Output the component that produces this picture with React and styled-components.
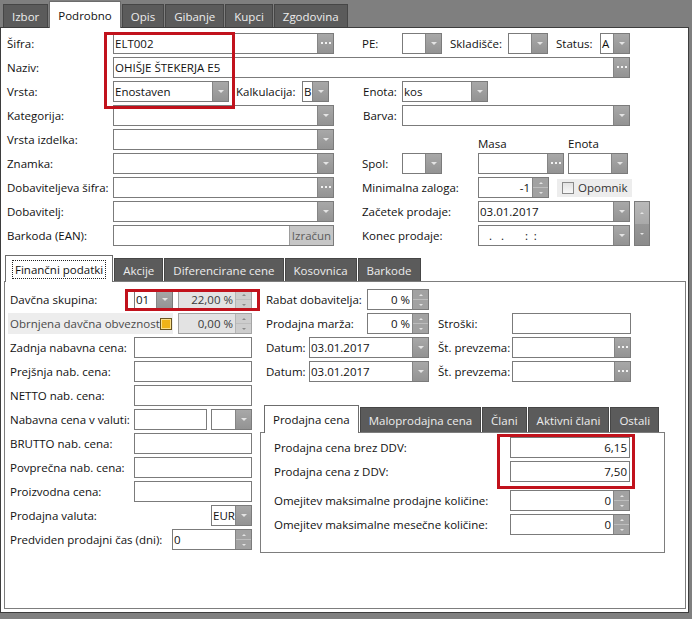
import React from 'react';
import styled, { createGlobalStyle, css } from 'styled-components';

const GlobalStyle = createGlobalStyle`
  html, body {
    margin: 0;
    padding: 0;
    background: #7f7f7f;
  }
  body {
    font-family: "Open Sans", "Noto Sans", sans-serif;
    font-size: 11.5px;
    color: #111;
  }
  * {
    box-sizing: border-box;
  }
`;

const Screen = styled.div`
  position: relative;
  width: 692px;
  height: 619px;
  background: #7f7f7f;
  overflow: hidden;
`;

const TabBar = styled.div`
  position: relative;
  z-index: 1;
  flex: none;
  display: flex;
  align-items: flex-end;
  gap: 1px;
  height: ${(p) => p.$h}px;
  padding-left: ${(p) => p.$pl || 0}px;
`;

const Tab = styled.div`
  display: flex;
  align-items: center;
  justify-content: center;
  height: ${(p) => p.$h}px;
  padding: 0 ${(p) => p.$px || 8}px;
  white-space: nowrap;
  background: #5b5b5b;
  color: #ededed;
  border: 1px solid #464646;
  border-bottom: none;

  ${(p) =>
    p.$active &&
    css`
      height: ${p.$ah}px;
      margin-bottom: -1px;
      background: #fff;
      color: #111;
      border-color: #6c6c6c;
    `}
`;

const Focus = styled.span`
  padding: 1px 2px;
  outline: 1px dotted #222;
`;

const Window = styled.div`
  display: flex;
  flex-direction: column;
  width: 689px;
  height: 586px;
  background: #fff;
  border: 1px solid #3d3d3d;
`;

const TopForm = styled.div`
  display: flex;
  flex-direction: column;
  gap: 3px;
  padding: 5px 0 0 6px;
  margin-bottom: 9px;
`;

const Row = styled.div`
  display: flex;
  align-items: ${(p) => (p.$bottom ? 'flex-end' : 'center')};
  height: 21px;
  margin-top: ${(p) => p.$mt || 0}px;
  flex: none;
`;

const Split = styled.div`
  display: flex;
`;

const Column = styled.div`
  display: flex;
  flex-direction: column;
  gap: 3px;
  width: ${(p) => (p.$w ? `${p.$w}px` : 'auto')};
  margin-left: ${(p) => p.$ml || 0}px;
  padding-left: ${(p) => p.$pl || 0}px;
  flex: none;
`;

const Label = styled.span`
  flex: none;
  width: ${(p) => (p.$w ? `${p.$w}px` : 'auto')};
  margin-left: ${(p) => p.$ml || 0}px;
  line-height: ${(p) => p.$lh || 16}px;
  white-space: nowrap;
  color: #111;
`;

const Box = styled.div`
  flex: none;
  display: flex;
  width: ${(p) => p.$w}px;
  height: 100%;
  margin-left: ${(p) => p.$ml || 0}px;
  background: ${(p) => (p.$disabled ? '#e3e3e3' : '#fff')};
  border: 1px solid ${(p) => (p.$disabled ? '#a4a4a4' : '#7b7b7b')};
`;

const Val = styled.span`
  flex: 1;
  min-width: 0;
  display: flex;
  align-items: center;
  justify-content: ${(p) => (p.$right ? 'flex-end' : 'flex-start')};
  padding: 0 2px 0 ${(p) => p.$pl || 1}px;
  white-space: pre;
  overflow: hidden;
  color: ${(p) => (p.$disabled ? '#3a3a3a' : '#111')};
`;

const GrayBtn = styled.span`
  flex: none;
  display: flex;
  align-items: center;
  justify-content: center;
  width: 16px;
  background: linear-gradient(#a8a8a8, #939393);
  border-left: 1px solid #858585;
`;

const Arrow = styled.span`
  width: 0;
  height: 0;
  border-left: ${(p) => p.$s || 3}px solid transparent;
  border-right: ${(p) => p.$s || 3}px solid transparent;
  ${(p) =>
    p.$up
      ? `border-bottom: ${p.$s || 3}px solid ${p.$c || '#e4e4e4'};`
      : `border-top: ${p.$s || 3}px solid ${p.$c || '#e4e4e4'};`}
`;

const SpinCol = styled.span`
  flex: none;
  display: flex;
  flex-direction: column;
  width: 16px;
  border-left: 1px solid ${(p) => (p.$disabled ? '#b5b5b5' : '#858585')};
`;

const SpinHalf = styled.span`
  flex: 1;
  display: flex;
  align-items: center;
  justify-content: center;
  background: ${(p) => (p.$disabled ? '#cdcdcd' : '#a2a2a2')};
  & + & {
    border-top: 1px solid ${(p) => (p.$disabled ? '#bdbdbd' : '#8c8c8c')};
  }
`;

const CalcBtn = styled.span`
  flex: none;
  display: flex;
  align-items: center;
  justify-content: center;
  width: 44px;
  background: #c6c6c6;
  border-left: 1px solid #9d9d9d;
  color: #5c5c5c;
`;

const TallSpin = styled.div`
  flex: none;
  display: flex;
  flex-direction: column;
  width: 16px;
  margin-left: 4px;
  border: 1px solid #7b7b7b;
`;

const TallHalf = styled.span`
  flex: 1;
  display: flex;
  align-items: center;
  justify-content: center;
  background: ${(p) => (p.$top ? 'linear-gradient(#b9b9b9, #a9a9a9)' : 'linear-gradient(#979797, #8b8b8b)')};
`;

const CheckArea = styled.div`
  flex: none;
  display: flex;
  align-items: center;
  gap: 4px;
  width: ${(p) => p.$w}px;
  height: 18px;
  margin-left: ${(p) => p.$ml || 0}px;
  padding-left: 5px;
  background: #ededed;
  color: #333;
`;

const CheckSquare = styled.span`
  flex: none;
  width: 12px;
  height: 12px;
  border: 1px solid #8a8a8a;
  background: linear-gradient(#e2e2e2, #f7f7f7);
`;

const FlagLabel = styled.div`
  flex: none;
  display: flex;
  align-items: center;
  justify-content: space-between;
  width: 165px;
  height: 100%;
  margin-left: -2px;
  padding: 0 1px 0 2px;
  background: #ededed;
  color: #4a4a4a;
  white-space: nowrap;
`;

const FlagBox = styled.span`
  flex: none;
  width: 12px;
  height: 12px;
  border: 1px solid #6a5520;
  background: #f0b418;
  box-shadow: inset 0 0 0 1px #fbe08a;
`;

const InnerTabs = styled.div`
  flex: 1;
  display: flex;
  flex-direction: column;
  margin: 0 2px 3px 3px;
`;

const FinPanel = styled.div`
  flex: 1;
  display: flex;
  gap: 8px;
  padding: 7px 0 0 5px;
  border: 1px solid #7d7d7d;
`;

const FinRight = styled.div`
  flex: none;
  width: 405px;
  display: flex;
  flex-direction: column;
`;

const PriceTabs = styled.div`
  display: flex;
  flex-direction: column;
  margin-top: 23px;
`;

const PricePanel = styled.div`
  display: flex;
  flex-direction: column;
  gap: 3px;
  padding: 4px 0 17px 13px;
  border: 1px solid #7d7d7d;
`;

const Mark = styled.div`
  position: absolute;
  left: ${(p) => p.$x}px;
  top: ${(p) => p.$y}px;
  width: ${(p) => p.$w}px;
  height: ${(p) => p.$h}px;
  border: 3px solid #c1121c;
  pointer-events: none;
  z-index: 5;
`;

const Dots = () => (
  <svg width="10" height="3" viewBox="0 0 10 3">
    <rect x="0" y="0" width="2" height="2" fill="#f2f2f2" />
    <rect x="4" y="0" width="2" height="2" fill="#f2f2f2" />
    <rect x="8" y="0" width="2" height="2" fill="#f2f2f2" />
  </svg>
);

const Combo = ({ w, ml, value = '' }) => (
  <Box $w={w} $ml={ml}>
    <Val>{value}</Val>
    <GrayBtn>
      <Arrow />
    </GrayBtn>
  </Box>
);

const Lookup = ({ w, ml, value = '' }) => (
  <Box $w={w} $ml={ml}>
    <Val>{value}</Val>
    <GrayBtn>
      <Dots />
    </GrayBtn>
  </Box>
);

const TextBox = ({ w, ml, value = '', right }) => (
  <Box $w={w} $ml={ml}>
    <Val $right={right}>{value}</Val>
  </Box>
);

const Spin = ({ w, ml, value = '', right, disabled }) => (
  <Box $w={w} $ml={ml} $disabled={disabled}>
    <Val $right={right} $disabled={disabled}>
      {value}
    </Val>
    <SpinCol $disabled={disabled}>
      <SpinHalf $disabled={disabled}>
        <Arrow $up $s={2} $c={disabled ? '#8a8a8a' : '#e4e4e4'} />
      </SpinHalf>
      <SpinHalf $disabled={disabled}>
        <Arrow $s={2} $c={disabled ? '#8a8a8a' : '#e4e4e4'} />
      </SpinHalf>
    </SpinCol>
  </Box>
);

const topTabs = ['Izbor', 'Podrobno', 'Opis', 'Gibanje', 'Kupci', 'Zgodovina'];
const finTabs = ['Akcije', 'Diferencirane cene', 'Kosovnica', 'Barkode'];
const priceTabs = ['Prodajna cena', 'Maloprodajna cena', 'Člani', 'Aktivni člani', 'Ostali'];

const App = () => {
  return (
    <Screen>
      <GlobalStyle />
      <TabBar $h={27} $pl={3}>
        {topTabs.map((t) => (
          <Tab key={t} $h={23} $ah={27} $active={t === 'Podrobno'}>
            {t}
          </Tab>
        ))}
      </TabBar>

      <Window>
        <TopForm>
          <Row>
            <Label $w={106}>Šifra:</Label>
            <Lookup w={221} value="ELT002" />
            <Label $w={40} $ml={28}>PE:</Label>
            <Combo w={40} />
            <Label $w={58} $ml={8}>Skladišče:</Label>
            <Combo w={40} />
            <Label $w={44} $ml={8}>Status:</Label>
            <Combo w={30} value="A" />
          </Row>
          <Row>
            <Label $w={106}>Naziv:</Label>
            <Lookup w={517} value="OHIŠJE ŠTEKERJA E5" />
          </Row>
          <Row>
            <Label $w={106}>Vrsta:</Label>
            <Combo w={116} value="Enostaven" />
            <Label $w={66} $ml={7}>Kalkulacija:</Label>
            <Combo w={27} value="B" />
            <Label $w={39} $ml={34}>Enota:</Label>
            <Combo w={86} value="kos" />
          </Row>
          <Row>
            <Label $w={106}>Kategorija:</Label>
            <Combo w={221} />
            <Label $w={39} $ml={29}>Barva:</Label>
            <Combo w={228} />
          </Row>

          <Split>
            <Column>
              <Row>
                <Label $w={106}>Vrsta izdelka:</Label>
                <Combo w={221} />
              </Row>
              <Row>
                <Label $w={106}>Znamka:</Label>
                <Combo w={221} />
              </Row>
              <Row>
                <Label $w={106}>Dobaviteljeva šifra:</Label>
                <Lookup w={221} />
              </Row>
              <Row>
                <Label $w={106}>Dobavitelj:</Label>
                <Combo w={221} />
              </Row>
              <Row>
                <Label $w={106}>Barkoda (EAN):</Label>
                <Box $w={221}>
                  <Val />
                  <CalcBtn>Izračun</CalcBtn>
                </Box>
              </Row>
            </Column>

            <Column $ml={28}>
              <Row $bottom>
                <Label $w={90} $ml={116} $lh={12}>Masa</Label>
                <Label $lh={12}>Enota</Label>
              </Row>
              <Row>
                <Label $w={40}>Spol:</Label>
                <Combo w={40} />
                <Lookup w={86} ml={36} />
                <Combo w={60} ml={4} />
              </Row>
              <Row>
                <Label $w={116}>Minimalna zaloga:</Label>
                <Spin w={71} value="-1" right />
                <CheckArea $w={75} $ml={8}>
                  <CheckSquare />
                  Opomnik
                </CheckArea>
              </Row>
              <Split>
                <Column>
                  <Row>
                    <Label $w={116}>Začetek prodaje:</Label>
                    <Combo w={152} value="03.01.2017" />
                  </Row>
                  <Row>
                    <Label $w={116}>Konec prodaje:</Label>
                    <Combo w={152} value={'   .   .       :  :'} />
                  </Row>
                </Column>
                <TallSpin>
                  <TallHalf $top>
                    <Arrow $up $s={2} />
                  </TallHalf>
                  <TallHalf>
                    <Arrow $s={2} />
                  </TallHalf>
                </TallSpin>
              </Split>
            </Column>
          </Split>
        </TopForm>

        <InnerTabs>
          <TabBar $h={26} $pl={1}>
            <Tab $active $h={23} $ah={27} $px={7}>
              <Focus>Finančni podatki</Focus>
            </Tab>
            {finTabs.map((t) => (
              <Tab key={t} $h={23}>
                {t}
              </Tab>
            ))}
          </TabBar>

          <FinPanel>
            <Column $w={242}>
              <Row>
                <Label $w={124}>Davčna skupina:</Label>
                <Combo w={39} value="01" />
                <Spin w={74} ml={5} value="22,00 %" right disabled />
              </Row>
              <Row>
                <FlagLabel>
                  Obrnjena davčna obveznost
                  <FlagBox />
                </FlagLabel>
                <Spin w={74} ml={5} value="0,00 %" right disabled />
              </Row>
              <Row>
                <Label $w={124}>Zadnja nabavna cena:</Label>
                <TextBox w={118} />
              </Row>
              <Row>
                <Label $w={124}>Prejšnja nab. cena:</Label>
                <TextBox w={118} />
              </Row>
              <Row>
                <Label $w={124}>NETTO nab. cena:</Label>
                <TextBox w={118} />
              </Row>
              <Row>
                <Label $w={124}>Nabavna cena v valuti:</Label>
                <TextBox w={73} />
                <Combo w={41} ml={4} />
              </Row>
              <Row>
                <Label $w={124}>BRUTTO nab. cena:</Label>
                <TextBox w={118} />
              </Row>
              <Row>
                <Label $w={124}>Povprečna nab. cena:</Label>
                <TextBox w={118} />
              </Row>
              <Row>
                <Label $w={124}>Proizvodna cena:</Label>
                <TextBox w={118} />
              </Row>
              <Row>
                <Label $w={201}>Prodajna valuta:</Label>
                <Combo w={41} value="EUR" />
              </Row>
              <Row>
                <Label $w={162}>Predviden prodajni čas (dni):</Label>
                <Spin w={80} value="0" />
              </Row>
            </Column>

            <FinRight>
              <Column $pl={6}>
                <Row>
                  <Label $w={101}>Rabat dobavitelja:</Label>
                  <Spin w={62} value="0 %" right />
                </Row>
                <Row>
                  <Label $w={101}>Prodajna marža:</Label>
                  <Spin w={62} value="0 %" right />
                  <Label $w={74} $ml={9}>Stroški:</Label>
                  <TextBox w={119} />
                </Row>
                <Row>
                  <Label $w={43}>Datum:</Label>
                  <Combo w={120} value="03.01.2017" />
                  <Label $w={74} $ml={9}>Št. prevzema:</Label>
                  <Lookup w={119} />
                </Row>
                <Row>
                  <Label $w={43}>Datum:</Label>
                  <Combo w={120} value="03.01.2017" />
                  <Label $w={74} $ml={9}>Št. prevzema:</Label>
                  <Lookup w={119} />
                </Row>
              </Column>

              <PriceTabs>
                <TabBar $h={27} $pl={4}>
                  {priceTabs.map((t, i) => (
                    <Tab key={t} $h={25} $ah={28} $active={i === 0}>
                      {t}
                    </Tab>
                  ))}
                </TabBar>
                <PricePanel>
                  <Row>
                    <Label $w={236}>Prodajna cena brez DDV:</Label>
                    <TextBox w={120} value="6,15" right />
                  </Row>
                  <Row>
                    <Label $w={236}>Prodajna cena z DDV:</Label>
                    <TextBox w={120} value="7,50" right />
                  </Row>
                  <Row $mt={5}>
                    <Label $w={236}>Omejitev maksimalne prodajne količine:</Label>
                    <Spin w={120} value="0" right />
                  </Row>
                  <Row>
                    <Label $w={236}>Omejitev maksimalne mesečne količine:</Label>
                    <Spin w={120} value="0" right />
                  </Row>
                </PricePanel>
              </PriceTabs>
            </FinRight>
          </FinPanel>
        </InnerTabs>
      </Window>

      <Mark $x={104} $y={32} $w={131} $h={77} />
      <Mark $x={125} $y={289} $w={135} $h={22} />
      <Mark $x={497} $y={434} $w={138} $h={55} />
    </Screen>
  );
};

export default App;
